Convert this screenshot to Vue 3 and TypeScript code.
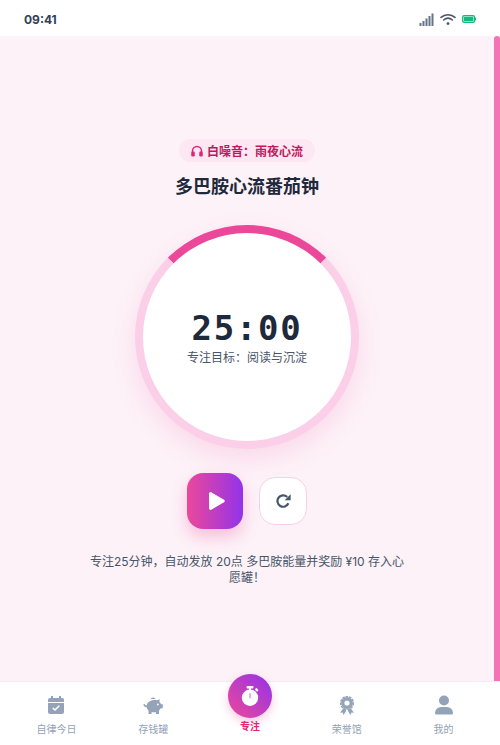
<template>
  <div class="phone">
    <header class="status">
      <span class="clock">09:41</span>
      <div class="status-icons">
        <svg width="15" height="13" viewBox="0 0 15 13" fill="#64748b">
          <rect x="0.5" y="10" width="2" height="3" />
          <rect x="3.5" y="8" width="2" height="5" />
          <rect x="6.5" y="5.5" width="2" height="7.5" />
          <rect x="9.5" y="3" width="2" height="10" />
          <rect x="12.5" y="0.5" width="2" height="12.5" />
        </svg>
        <svg width="16" height="13" viewBox="0 0 16 13" fill="none" stroke="#475569" stroke-width="1.5" stroke-linecap="round">
          <path d="M1 4.4C5 .7 11 .7 15 4.4" />
          <path d="M3.6 7C6.2 4.8 9.8 4.8 12.4 7" />
          <circle cx="8" cy="10.6" r="1.4" fill="#475569" stroke="none" />
        </svg>
        <svg width="14" height="8" viewBox="0 0 14 8">
          <rect x="0.6" y="0.6" width="12" height="6.8" rx="1.6" fill="#a7f3d0" stroke="#10b981" stroke-width="1.2" />
          <rect x="2" y="2" width="9.2" height="4" fill="#10b981" />
          <rect x="13" y="2.6" width="1" height="2.8" fill="#10b981" />
        </svg>
      </div>
    </header>

    <div class="body">
      <main class="focus">
        <div class="noise">
          <svg width="12" height="12" viewBox="0 0 24 24" fill="none">
            <path d="M3 15v-3a9 9 0 0 1 18 0v3" stroke="#db2777" stroke-width="3" />
            <rect x="0.500" y="13" width="7" height="10" rx="2.500" fill="#db2777" />
            <rect x="16.500" y="13" width="7" height="10" rx="2.500" fill="#db2777" />
          </svg>
          <span>白噪音：雨夜心流</span>
        </div>
        <h1 class="title">多巴胺心流番茄钟</h1>

        <div class="dial">
          <div class="time">25:00</div>
          <div class="goal">专注目标：阅读与沉淀</div>
        </div>

        <div class="controls">
          <button class="play">
            <svg width="16" height="18" viewBox="0 0 16 18">
              <path d="M2.600 .4 15 7.700a1.500 1.500 0 0 1 0 2.600L2.600 17.600A1.700 1.700 0 0 1 0 16.200V1.800A1.700 1.700 0 0 1 2.600 .4Z" fill="#fff" />
            </svg>
          </button>
          <button class="reset">
            <svg width="15" height="14" viewBox="0 0 15 14" fill="none">
              <path d="M12.400 9.300A5.700 5.700 0 1 1 11.200 3" stroke="#475569" stroke-width="2.200" />
              <path d="M14.600 0.300V6.300H8.600Z" fill="#475569" />
            </svg>
          </button>
        </div>

        <p class="hint">专注25分钟，自动发放 20点 多巴胺能量并奖励 ¥10 存入心愿罐！</p>
      </main>
      <div class="scrollbar"></div>
    </div>

    <nav class="tabs">
      <div v-for="t in leftTabs" :key="t.label" class="tab">
        <svg class="tab-icon" width="20" height="20" viewBox="0 0 20 20" v-html="t.icon"></svg>
        <span>{{ t.label }}</span>
      </div>
      <div class="tab active">
        <div class="fab">
          <svg width="18" height="20" viewBox="0 0 18 20">
            <rect x="5.500" y="0" width="7" height="2.400" rx="1" fill="#fff" />
            <rect x="8" y="1.500" width="2" height="3" fill="#fff" />
            <rect x="14" y="2.600" width="3.400" height="2.400" rx="1" transform="rotate(45 15.700 3.800)" fill="#fff" />
            <circle cx="9" cy="11.700" r="8.200" fill="#fff" />
            <rect x="8.200" y="7" width="1.600" height="5.500" rx="0.800" fill="#d8a4e0" />
          </svg>
        </div>
        <span>专注</span>
      </div>
      <div v-for="t in rightTabs" :key="t.label" class="tab">
        <svg class="tab-icon" width="20" height="20" viewBox="0 0 20 20" v-html="t.icon"></svg>
        <span>{{ t.label }}</span>
      </div>
    </nav>
  </div>
</template>

<script setup lang="ts">
interface Tab {
  label: string
  icon: string
}

const leftTabs: Tab[] = [
  {
    label: '自律今日',
    icon: '<path fill="#94a3b8" d="M5 1h2V3h6V1h2V3h.5A2 2 0 0 1 18 5V7H2V5A2 2 0 0 1 4 3H5ZM2 8H18V17A2 2 0 0 1 16 19H4A2 2 0 0 1 2 17Z"/><path fill="none" stroke="#fff" stroke-width="1.600" d="M6.800 13 9 15 13.300 10.800"/>',
  },
  {
    label: '存钱罐',
    icon: '<path fill="#94a3b8" d="M7.300 4.300A3 2.800 0 0 1 12.800 4.300C11 3.900 9 3.900 7.300 4.300ZM4.600 8C6.600 5.300 11 4.400 14 5.300L16.800 4.200 16.400 7C17.200 7.700 17.700 8.500 18 9.300H19.800V13.200H17.800C17.300 14.200 16.600 14.900 16 15.400V19H13V17.300H8.500V19H5.500V15.600C4.500 14.700 3.900 13.500 3.700 12.200 2 12.300 .5 11.300 .4 9.600 .4 8.800 1.800 8.600 2 9.500 2.200 10.300 3 10.500 3.900 10.400 4 9.500 4.200 8.700 4.600 8Z"/><circle cx="14.800" cy="9.500" r="0.900" fill="#fff"/>',
  },
]

const rightTabs: Tab[] = [
  {
    label: '荣誉馆',
    icon: '<path fill="#94a3b8" d="m6.500 13-3.500 4.800 2.500-.2L6.700 20 9.300 15.500ZM13.500 13l3.500 4.800-2.500-.2L13.300 20 10.700 15.500Z"/><circle cx="10" cy="8" r="4.300" fill="none" stroke="#94a3b8" stroke-width="3.400"/><circle cx="10" cy="8" r="6.400" fill="none" stroke="#94a3b8" stroke-width="1.400" stroke-dasharray="2.500 1"/>',
  },
  {
    label: '我的',
    icon: '<circle cx="10" cy="5.500" r="5" fill="#94a3b8"/><path fill="#94a3b8" d="M7 12h6a6 6 0 0 1 6 6 1.500 1.500 0 0 1-1.500 1.500H2.500A1.500 1.500 0 0 1 1 18 6 6 0 0 1 7 12Z"/>',
  },
]
</script>

<style scoped>
.phone {
  width: 500px;
  height: 745px;
  display: flex;
  flex-direction: column;
  overflow: hidden;
  background: #fff;
  font-family: Inter, "Noto Sans CJK SC", sans-serif;
}

.status {
  height: 36px;
  flex: none;
  display: flex;
  align-items: center;
  justify-content: space-between;
  padding: 2px 24px 0;
  background: #fff;
  box-sizing: border-box;
}

.clock {
  font-size: 12px;
  font-weight: 700;
  color: #334155;
}

.status-icons {
  display: flex;
  align-items: center;
  gap: 6px;
}

.body {
  flex: 1;
  min-height: 0;
  display: flex;
  background: #fdf2f8;
}

.focus {
  flex: 1;
  display: flex;
  flex-direction: column;
  align-items: center;
  padding-top: 103px;
}

.scrollbar {
  width: 6px;
  flex: none;
  background: #f472b6;
  border-radius: 3px 3px 0 0;
}

.noise {
  height: 23px;
  display: flex;
  align-items: center;
  gap: 4px;
  padding: 0 12px;
  border-radius: 12px;
  background: #fce7f3;
  color: #be185d;
  font-size: 12px;
  font-weight: 700;
}

.title {
  margin: 13px 0 0;
  font-size: 18px;
  line-height: 24px;
  font-weight: 700;
  color: #1e293b;
}

.dial {
  width: 224px;
  height: 224px;
  margin-top: 26px;
  box-sizing: border-box;
  border-radius: 50%;
  border: 8px solid #fbcfe8;
  border-top-color: #ec4899;
  background: #fff;
  box-shadow: 0 10px 25px rgba(236, 72, 153, 0.15);
  display: flex;
  flex-direction: column;
  align-items: center;
  justify-content: center;
}

.time {
  font-family: "DejaVu Sans Mono", monospace;
  font-size: 34px;
  line-height: 40px;
  font-weight: 700;
  letter-spacing: 0.05em;
  color: #1e293b;
}

.goal {
  margin-top: 2px;
  font-size: 12px;
  line-height: 16px;
  color: #475569;
}

.controls {
  display: flex;
  align-items: center;
  gap: 16px;
  margin-top: 24px;
}

.play,
.reset {
  padding: 0;
  display: flex;
  align-items: center;
  justify-content: center;
}

.play {
  width: 56px;
  height: 56px;
  padding-left: 4px;
  border: none;
  border-radius: 16px;
  background: linear-gradient(90deg, #ec4899, #9333ea);
  box-shadow: 0 8px 16px rgba(236, 72, 153, 0.3);
}

.reset {
  width: 48px;
  height: 48px;
  border: 1px solid #fbcfe8;
  border-radius: 16px;
  background: #fff;
}

.hint {
  width: 320px;
  margin: 25px 0 0;
  text-align: center;
  font-size: 12px;
  line-height: 16px;
  color: #475569;
}

.tabs {
  height: 64px;
  flex: none;
  box-sizing: border-box;
  padding: 0 8px;
  border-top: 1px solid #fce7f3;
  background: #fff;
  display: grid;
  grid-template-columns: repeat(5, 1fr);
}

.tab {
  display: flex;
  flex-direction: column;
  align-items: center;
  padding-top: 13px;
  gap: 7px;
  font-size: 10px;
  line-height: 14px;
  color: #94a3b8;
  white-space: nowrap;
}

.tab.active {
  color: #db2777;
  font-weight: 700;
  padding-top: 0;
  gap: 1px;
}

.fab {
  width: 44px;
  height: 44px;
  margin-top: -8px;
  border-radius: 50%;
  background: linear-gradient(45deg, #ec4899, #9333ea);
  box-shadow: 0 4px 10px rgba(236, 72, 153, 0.3);
  display: flex;
  align-items: center;
  justify-content: center;
}
</style>

<style>
html,
body {
  margin: 0;
  background: #fff;
}
</style>
